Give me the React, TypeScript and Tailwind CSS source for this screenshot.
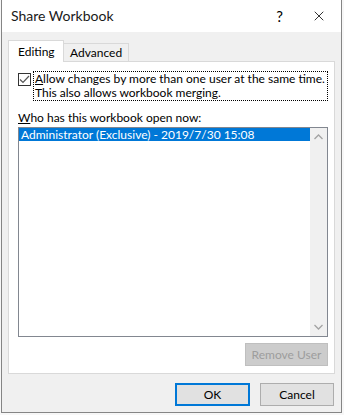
import { X } from "lucide-react"

const ui = "font-['Lato','Noto_Sans',sans-serif]"

function Chevron({ up }: { up?: boolean }) {
  return (
    <svg width="9" height="6" viewBox="0 0 9 6" className="text-[#a3a3a3]">
      <path d={up ? "M0.5 5 L4.5 1 L8.5 5" : "M0.5 1 L4.5 5 L8.5 1"} fill="none" stroke="currentColor" strokeWidth="1.3" />
    </svg>
  )
}

export default function App() {
  return (
    <div className={`w-[344px] h-[415px] bg-[#f7f7f7] ${ui} text-[12px] text-black`}>
      <div className="ml-px w-[341px] h-[413px] border-x border-b border-[#858585] bg-[#f0f0f0] flex flex-col">
        {/* title bar */}
        <div className="h-[32px] bg-white flex items-center pl-[9px]">
          <span className="text-[14px] leading-none text-[#1a1a1a]">Share Workbook</span>
          <span className="ml-auto mr-[28px] text-[15px] leading-none">?</span>
          <X size={16} strokeWidth={1.2} className="mr-[14px]" />
        </div>

        <div className="flex-1 px-[6px] pt-[7px] flex flex-col">
          {/* tabs */}
          <div className="flex items-end h-[22px] relative z-10">
            <div className="w-[56px] h-[22px] -mb-px bg-white border border-b-0 border-[#d9d9d9] pl-[9px] pt-[3px] leading-[15px]">
              Editing
            </div>
            <div className="w-[65px] h-[18px] bg-[#f0f0f0] border border-l-0 border-b-0 border-[#d9d9d9] pl-[6px] pt-px leading-[15px]">
              Advanced
            </div>
          </div>

          {/* panel */}
          <div className="h-[313px] bg-white border border-[#d9d9d9] pl-[9px] pr-[6px] pt-[9px] flex flex-col">
            <div className="flex items-start">
              <div className="w-[13px] h-[13px] mt-[2px] border border-[#333] flex items-center justify-center">
                <svg width="11" height="9" viewBox="0 0 11 9">
                  <path d="M1 4.5 L4 7.5 L10 1" fill="none" stroke="#555" strokeWidth="1.2" />
                </svg>
              </div>
              <div className="ml-[2px] flex-1 border border-dotted border-black px-px leading-[14px]">
                <div><span className="underline">A</span>llow changes by more than one user at the same time.</div>
                <div>This also allows workbook merging.</div>
              </div>
            </div>

            <div className="mt-[9px] leading-[15px]">
              <span className="underline">W</span>ho has this workbook open now:
            </div>

            <div className="mt-[2px] h-[210px] border border-[#828790] flex">
              <div className="flex-1">
                <div className="h-[13px] bg-[#0078d7] text-white leading-[13px] pl-[2px]">
                  Administrator (Exclusive) - 2019/7/30 15:08
                </div>
              </div>
              <div className="w-[17px] bg-[#f0f0f0] flex flex-col items-center justify-between py-[6px]">
                <Chevron up />
                <Chevron />
              </div>
            </div>

            <div className="mt-[6px] self-end w-[83px] h-[23px] bg-[#cccccc] border border-[#bfbfbf] text-[#9d9d9d] flex items-center justify-center">
              Remove User
            </div>
          </div>

          {/* dialog buttons */}
          <div className="mt-[9px] flex justify-end gap-[10px] pr-px">
            <div className="w-[75px] h-[23px] bg-[#e1e1e1] border-2 border-[#0078d7] flex items-center justify-center">
              OK
            </div>
            <div className="w-[74px] h-[23px] bg-[#e1e1e1] border border-[#adadad] flex items-center justify-center">
              Cancel
            </div>
          </div>
        </div>
      </div>
    </div>
  )
}
